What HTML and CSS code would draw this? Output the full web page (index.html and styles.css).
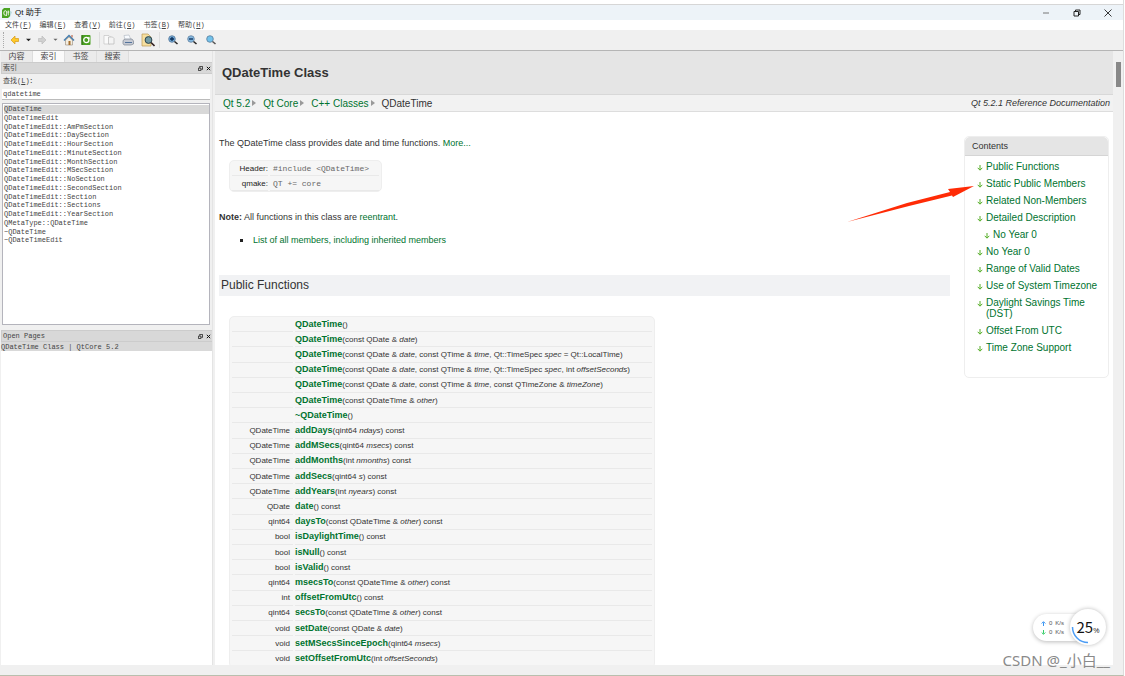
FILE: index.html
```html
<!DOCTYPE html>
<html lang="zh-CN">
<head>
<meta charset="utf-8">
<title>Qt 助手</title>
<link rel="stylesheet" href="styles.css">
</head>
<body>
<div class="window">
  <header class="titlebar">
    <svg class="app-icon" viewBox="0 0 10 10"><path d="M7 2l3 2-2 5-3 1z" fill="#b9dbe0"/><path d="M0 2l2-2h6v8l-2 2H0z" fill="#4ba322"/><ellipse cx="3.3" cy="5" rx="1.5" ry="2.3" fill="none" stroke="#fff" stroke-width=".9"/><path d="M4 7l1 1M6.3 2.5v4.8M5.4 4h2" stroke="#fff" stroke-width=".8"/></svg>
    <h1 class="app-title">Qt 助手</h1>
    <div class="window-buttons">
      <button aria-label="Minimize"><svg viewBox="0 0 10 10"><path d="M2 5h6" stroke="#777"/></svg></button>
      <button aria-label="Restore"><svg viewBox="0 0 10 10"><path d="M2 3.5h4.5V8H2zM3.5 3.5V2H8v4.5H6.5" fill="none" stroke="#222"/></svg></button>
      <button aria-label="Close"><svg viewBox="0 0 10 10"><path d="M1.5 1.5l7 7M8.500 1.500l-7 7" stroke="#222" stroke-width=".9"/></svg></button>
    </div>
  </header>
  <nav class="menubar">
    <button>文件(<u>F</u>)</button><button>编辑(<u>E</u>)</button><button>查看(<u>V</u>)</button><button>前往(<u>G</u>)</button><button>书签(<u>B</u>)</button><button>帮助(<u>H</u>)</button>
  </nav>
  <div class="toolbar">
    <span class="grip"></span>
    <button aria-label="Back"><svg viewBox="0 0 12 12"><path d="M2 6l4-4v2.500h3.500v3H6V10z" fill="#ffc928" stroke="#d59a18" stroke-width=".7"/></svg></button>
    <button class="drop" aria-label="Back history"><svg viewBox="0 0 6 12"><path d="M0 4.500h6L3 7.500z" fill="#222"/></svg></button>
    <button aria-label="Forward"><svg viewBox="0 0 12 12"><path d="M10 6L6 2v2.500H2.500v3H6V10z" fill="#d0d0d0" stroke="#bbb" stroke-width=".7"/></svg></button>
    <button class="drop" aria-label="Forward history"><svg viewBox="0 0 6 12"><path d="M.5 4.500h5L3 7z" fill="#666"/></svg></button>
    <button aria-label="Home"><svg viewBox="0 0 12 12"><path d="M2.500 6v5h7V6L6 3z" fill="#f3ede0" stroke="#938777" stroke-width=".6"/><path d="M1 6.500L6 1.500l5 5" fill="none" stroke="#477eae" stroke-width="1.500"/><path d="M5.500 7h2v4h-2z" fill="#a66f2e"/><path d="M8.500 1h1v2.500h-1z" fill="#b55332"/></svg></button>
    <button class="sync" aria-label="Sync"><svg viewBox="0 0 12 12"><rect x="1.500" y="1" width="9" height="10" rx="1" fill="#4a9f22"/><path d="M2 1v10" stroke="#28690e"/><circle cx="6.300" cy="6" r="2.600" fill="none" stroke="#fff" stroke-width="1.300"/><path d="M7 5l3-.5-1-2z" fill="#fff"/></svg></button>
    <span class="rule"></span>
    <button aria-label="Copy"><svg viewBox="0 0 12 12"><path d="M1 1.500h5l1 1V10H1z" fill="#fafafa" stroke="#c4c4c4" stroke-width=".7"/><path d="M5.500 3h4l1.500 1.500V10H5.500z" fill="#f4f4f4" stroke="#b8b8b8" stroke-width=".7"/></svg></button>
    <button aria-label="Print"><svg viewBox="0 0 12 12"><path d="M3 6L2 1.500l5-.5 2 5z" fill="#f8fbff" stroke="#a9b1bc" stroke-width=".6"/><path d="M1 6.500l2-1.500h7l1.500 2v3L9 11H2L1 9.500z" fill="#c6cad3" stroke="#707987" stroke-width=".6"/><path d="M3 8.500h7" stroke="#54739b"/></svg></button>
    <button class="find" aria-label="Find"><svg viewBox="0 0 14 14"><path d="M1 1h6l3 3v9H1z" fill="#f6dfa0" stroke="#b99955" stroke-width=".7"/><circle cx="7.500" cy="7" r="3.400" fill="#729ba4" stroke="#29444d"/><path d="M10 9.500l3.500 3.500" stroke="#322" stroke-width="1.600"/></svg></button>
    <span class="rule"></span>
    <button aria-label="Zoom in"><svg viewBox="0 0 12 12"><circle cx="5" cy="5" r="3.300" fill="#6fa8d6" stroke="#5a7898" stroke-width=".8"/><path d="M7.500 7.500L10.500 10" stroke="#272727" stroke-width="1.600"/><path d="M3 5h4M5 3v4" stroke="#0c2d58" stroke-width="1.300"/></svg></button>
    <button aria-label="Zoom out"><svg viewBox="0 0 12 12"><circle cx="5" cy="5" r="3.300" fill="#83b7df" stroke="#64839f" stroke-width=".8"/><path d="M7.500 7.500L10.500 10" stroke="#272727" stroke-width="1.600"/><path d="M3 5h4" stroke="#0c2d58" stroke-width="1.300"/></svg></button>
    <button aria-label="Normal size"><svg viewBox="0 0 12 12"><circle cx="5" cy="5" r="3.300" fill="#72c2eb" stroke="#597c9b" stroke-width=".8"/><path d="M7.500 7.500L10.500 10" stroke="#555" stroke-width="1.600"/></svg></button>
  </div>
  <div class="workspace">
    <aside class="side">
      <div class="tabs"><button>内容</button><button class="on">索引</button><button>书签</button><button>搜索</button></div>
      <div class="dock-title"><span>索引</span><button aria-label="Float index"><svg viewBox="0 0 6 6"><path d="M.5 2.500h3v3h-3zM2 2V.5h3.500V4H4" fill="none" stroke="#222"/></svg></button><button aria-label="Close index"><svg viewBox="0 0 6 6"><path d="M1 1l4 4M5 1L1 5" stroke="#111" stroke-width="1.200"/></svg></button></div>
      <label class="find-label" for="q">查找(<u>L</u>)：</label>
      <input class="find-input" id="q" value="qdatetime">
      <div class="index">
        <ul class="index-list">
          <li class="on">QDateTime</li><li>QDateTimeEdit</li><li>QDateTimeEdit::AmPmSection</li><li>QDateTimeEdit::DaySection</li><li>QDateTimeEdit::HourSection</li><li>QDateTimeEdit::MinuteSection</li><li>QDateTimeEdit::MonthSection</li><li>QDateTimeEdit::MSecSection</li><li>QDateTimeEdit::NoSection</li><li>QDateTimeEdit::SecondSection</li><li>QDateTimeEdit::Section</li><li>QDateTimeEdit::Sections</li><li>QDateTimeEdit::YearSection</li><li>QMetaType::QDateTime</li><li>~QDateTime</li><li>~QDateTimeEdit</li>
        </ul>
      </div>
      <div class="dock-title"><span>Open Pages</span><button aria-label="Float pages"><svg viewBox="0 0 6 6"><path d="M.5 2.500h3v3h-3zM2 2V.5h3.500V4H4" fill="none" stroke="#222"/></svg></button><button aria-label="Close pages"><svg viewBox="0 0 6 6"><path d="M1 1l4 4M5 1L1 5" stroke="#111" stroke-width="1.200"/></svg></button></div>
      <div class="pages"><div class="page-row">QDateTime Class | QtCore 5.2</div></div>
    </aside>
    <main class="doc">
      <div class="doc-head"><h2>QDateTime Class</h2></div>
      <nav class="crumbs"><a href="#">Qt 5.2</a><a href="#">Qt Core</a><a href="#">C++ Classes</a><span>QDateTime</span><em>Qt 5.2.1 Reference Documentation</em></nav>
      <div class="doc-body">
        <article class="article">
          <p>The QDateTime class provides date and time functions. <a href="#">More...</a></p>
          <table class="box meta">
            <tr><th>Header:</th><td>#include &lt;QDateTime&gt;</td></tr>
            <tr><th>qmake:</th><td>QT += core</td></tr>
          </table>
          <p><b>Note:</b> All functions in this class are <a href="#">reentrant</a>.</p>
          <ul class="members"><li><a href="#">List of all members, including inherited members</a></li></ul>
          <h3 class="section">Public Functions</h3>
          <table class="box functions">
            <colgroup><col class="type"><col></colgroup>
            <tr><td></td><td><a href="#">QDateTime</a>()</td></tr>
            <tr><td></td><td><a href="#">QDateTime</a>(const QDate &amp; <i>date</i>)</td></tr>
            <tr><td></td><td><a href="#">QDateTime</a>(const QDate &amp; <i>date</i>, const QTime &amp; <i>time</i>, Qt::TimeSpec <i>spec</i> = Qt::LocalTime)</td></tr>
            <tr><td></td><td><a href="#">QDateTime</a>(const QDate &amp; <i>date</i>, const QTime &amp; <i>time</i>, Qt::TimeSpec <i>spec</i>, int <i>offsetSeconds</i>)</td></tr>
            <tr><td></td><td><a href="#">QDateTime</a>(const QDate &amp; <i>date</i>, const QTime &amp; <i>time</i>, const QTimeZone &amp; <i>timeZone</i>)</td></tr>
            <tr><td></td><td><a href="#">QDateTime</a>(const QDateTime &amp; <i>other</i>)</td></tr>
            <tr><td></td><td><a href="#">~QDateTime</a>()</td></tr>
            <tr><td>QDateTime</td><td><a href="#">addDays</a>(qint64 <i>ndays</i>) const</td></tr>
            <tr><td>QDateTime</td><td><a href="#">addMSecs</a>(qint64 <i>msecs</i>) const</td></tr>
            <tr><td>QDateTime</td><td><a href="#">addMonths</a>(int <i>nmonths</i>) const</td></tr>
            <tr><td>QDateTime</td><td><a href="#">addSecs</a>(qint64 <i>s</i>) const</td></tr>
            <tr><td>QDateTime</td><td><a href="#">addYears</a>(int <i>nyears</i>) const</td></tr>
            <tr><td>QDate</td><td><a href="#">date</a>() const</td></tr>
            <tr><td>qint64</td><td><a href="#">daysTo</a>(const QDateTime &amp; <i>other</i>) const</td></tr>
            <tr><td>bool</td><td><a href="#">isDaylightTime</a>() const</td></tr>
            <tr><td>bool</td><td><a href="#">isNull</a>() const</td></tr>
            <tr><td>bool</td><td><a href="#">isValid</a>() const</td></tr>
            <tr><td>qint64</td><td><a href="#">msecsTo</a>(const QDateTime &amp; <i>other</i>) const</td></tr>
            <tr><td>int</td><td><a href="#">offsetFromUtc</a>() const</td></tr>
            <tr><td>qint64</td><td><a href="#">secsTo</a>(const QDateTime &amp; <i>other</i>) const</td></tr>
            <tr><td>void</td><td><a href="#">setDate</a>(const QDate &amp; <i>date</i>)</td></tr>
            <tr><td>void</td><td><a href="#">setMSecsSinceEpoch</a>(qint64 <i>msecs</i>)</td></tr>
            <tr><td>void</td><td><a href="#">setOffsetFromUtc</a>(int <i>offsetSeconds</i>)</td></tr>
          </table>
        </article>
        <nav class="toc">
          <h3>Contents</h3>
          <ul>
            <li><svg viewBox="0 0 6 6"><path d="M3 0v5M.7 2.800L3 5.200l2.300-2.400" /></svg><a href="#">Public Functions</a></li>
            <li><svg viewBox="0 0 6 6"><path d="M3 0v5M.7 2.800L3 5.200l2.300-2.400" /></svg><a href="#">Static Public Members</a></li>
            <li><svg viewBox="0 0 6 6"><path d="M3 0v5M.7 2.800L3 5.200l2.300-2.400" /></svg><a href="#">Related Non-Members</a></li>
            <li><svg viewBox="0 0 6 6"><path d="M3 0v5M.7 2.800L3 5.200l2.300-2.400" /></svg><a href="#">Detailed Description</a></li>
            <li class="sub"><svg viewBox="0 0 6 6"><path d="M3 0v5M.7 2.800L3 5.200l2.300-2.400" /></svg><a href="#">No Year 0</a></li>
            <li><svg viewBox="0 0 6 6"><path d="M3 0v5M.7 2.800L3 5.200l2.300-2.400" /></svg><a href="#">No Year 0</a></li>
            <li><svg viewBox="0 0 6 6"><path d="M3 0v5M.7 2.800L3 5.200l2.300-2.400" /></svg><a href="#">Range of Valid Dates</a></li>
            <li><svg viewBox="0 0 6 6"><path d="M3 0v5M.7 2.800L3 5.200l2.300-2.400" /></svg><a href="#">Use of System Timezone</a></li>
            <li><svg viewBox="0 0 6 6"><path d="M3 0v5M.7 2.800L3 5.200l2.300-2.400" /></svg><a href="#">Daylight Savings Time (DST)</a></li>
            <li><svg viewBox="0 0 6 6"><path d="M3 0v5M.7 2.800L3 5.200l2.300-2.400" /></svg><a href="#">Offset From UTC</a></li>
            <li><svg viewBox="0 0 6 6"><path d="M3 0v5M.7 2.800L3 5.200l2.300-2.400" /></svg><a href="#">Time Zone Support</a></li>
          </ul>
          <svg class="pointer" viewBox="0 0 128 38"><path d="M0 37L60 18 103 7 101 4 127 1 106 12 105 10.500 62 21z" fill="#ff2b06"/></svg>
        </nav>
      </div>
    </main>
    <div class="scroll"><div class="thumb"></div></div>
  </div>
  <footer class="status"></footer>
</div>
<div class="monitor">
  <div class="rates">
    <div><svg viewBox="0 0 6 6"><path d="M3 6V1.500M.8 3L3 .8 5.200 3" fill="none" stroke="#3994f2" stroke-width="1.200"/></svg><span>0</span><span>K/s</span></div>
    <div><svg viewBox="0 0 6 6"><path d="M3 0v4.500M.8 3L3 5.200 5.200 3" fill="none" stroke="#38cd6a" stroke-width="1.200"/></svg><span>0</span><span>K/s</span></div>
  </div>
  <div class="gauge"><svg viewBox="0 0 36 36"><path d="M2.500 18A15.500 15.500 0 0 0 18 33.500" fill="none" stroke="#4b9cf5" stroke-width="1.500"/></svg><span>25</span><small>%</small></div>
</div>
<div class="watermark">CSDN @_小白__</div>
</body>
</html>
```
FILE: styles.css
```css
* { box-sizing: border-box; }
body { margin: 0; height: 100vh; overflow: hidden; background: #fff; color: #333; font: 9px/12px "Liberation Sans", "Noto Sans CJK SC", sans-serif; position: relative; }
h1, h2, h3, p, ul { margin: 0; padding: 0; font-weight: normal; list-style: none; }
button { border: 0; padding: 0; margin: 0; background: none; font: inherit; color: inherit; display: block; }
svg { display: block; }
a { color: #00732f; text-decoration: none; }

.window { height: 100vh; padding-top: 4px; display: flex; flex-direction: column; margin-right: 1px; border-right: 1px solid #ddd; border-bottom: 1px solid #b9bfae; background: #f0f0f0; background-clip: content-box; }
.titlebar { display: flex; align-items: center; height: 16px; flex: none; border-top: 1px solid #d6d6d6; background: #edf3f8; padding-left: 2px; }
.app-icon { width: 10px; height: 10px; }
.app-title { font-size: 8px; color: #111; margin-left: 3px; }
.window-buttons { margin-left: auto; display: flex; gap: 21px; padding-right: 10px; }
.window-buttons svg { width: 10px; height: 10px; }

.menubar, .toolbar, .tabs, .dock-title, .find-label, .find-input, .index, .pages { font: 7px/10px "Liberation Mono", "Noto Sans CJK SC", monospace; }
.menubar { display: flex; gap: 8px; height: 10px; flex: none; background: #fff; padding-left: 5px; color: #444; }
.toolbar { display: flex; align-items: center; height: 21px; flex: none; padding-left: 3px; border-bottom: 1px solid #b5b5b5; gap: 5px; }
.toolbar svg { width: 12px; height: 12px; }
.toolbar .drop svg { width: 5px; }
.toolbar .find svg { width: 14px; height: 14px; }
.toolbar .rule + button ~ button { margin-left: 2px; }
.grip { width: 1px; height: 16px; border-left: 1px dotted #aaa; }
.rule { width: 1px; height: 16px; background: #ddd; margin-left: 2px; margin-right: -2px; }
.find + .rule { margin-left: -1px; margin-right: 0; }

.workspace { flex: 1; min-height: 0; display: flex; }
.side { width: 213px; flex: none; display: flex; flex-direction: column; padding-left: 1px; border-right: 1px solid #e4e4e4; color: #444; }
.tabs { display: flex; height: 11px; font-size: 8px; flex: none; }
.tabs button { width: 32px; background: #ebebeb; border-right: 1px solid #ddd; }
.tabs .on { background: #fafafa; }
.dock-title { display: flex; align-items: center; gap: 3px; height: 12px; flex: none; padding: 0 1px; background: #d8d8d8; border: 1px solid #ccc; border-right: 0; }
.dock-title span { flex: 1; }
.dock-title svg { width: 5px; height: 5px; }
.find-label { height: 15px; line-height: 14px; padding-left: 2px; flex: none; }
.find-input { width: auto; height: 11px; flex: none; margin: 0 2px 3px 1px; padding: 0 1px; border: 0; border-bottom: 1px solid #bbb; background: #fff; color: #444; }
.index { height: 222px; flex: none; margin: 0 2px 5px 1px; border: 1px solid #b4b4bc; background: #fff; padding-top: 1px; }
.index-list { height: 140px; display: grid; grid-auto-rows: 1fr; line-height: 8px; padding-left: 1px; }
.index-list .on { background: #d8d8d8; }
.pages { flex: 1; background: #fff; }
.page-row { height: 9px; background: #d9d9d9; }

.doc { flex: 1; min-width: 0; margin-left: 2px; display: flex; flex-direction: column; background: #fff; overflow: hidden; }
.doc-head { height: 44px; flex: none; background: #e5e5e5; padding: 14px 7px; border-bottom: 1px solid #d8d8d8; }
.doc-head h2 { font-size: 13px; line-height: 16px; font-weight: bold; }
.crumbs { display: flex; gap: 7px; height: 17px; line-height: 17px; flex: none; padding: 0 3px 0 8px; background: #f2f2f2; border-bottom: 1px solid #ddd; font-size: 10px; }
.crumbs a { display: flex; align-items: center; gap: 2px; }
.crumbs a::after { content: ""; border: 3px solid transparent; border-left: 4px solid #999; border-right: 0; }
.crumbs em { margin-left: auto; font-size: 9px; }
.doc-body { flex: 1; min-height: 0; display: flex; align-items: flex-start; gap: 14px; padding: 24px 4px 0; line-height: 14px; }
.article { flex: 1; min-width: 0; }
.box { background: #f6f6f6; border: 1px solid #eee; border-radius: 5px; border-spacing: 2px 0; margin-left: 10px; font-size: 8px; line-height: 13px; }
.box td, .box th { border-bottom: 1px solid #e9e9e9; padding: 0 3px; }
.meta { margin-top: 10px; margin-bottom: 18px; width: 153px; height: 32px; }
.meta th { font-weight: normal; text-align: right; width: 36px; padding: 0; color: #222; }
.meta td { font-family: "Liberation Mono", monospace; color: #666; }
.members { padding-left: 34px; margin-top: 8px; }
.members li { list-style: square; }
.members li::marker { color: #222; font-size: 11px; }
.section { margin-top: 28px; height: 21px; line-height: 21px; font-size: 12px; background: #f1f2f4; padding-left: 2px; }
.functions { margin-top: 20px; width: 426px; height: 352px; table-layout: fixed; }
.functions .type { width: 61px; }
.functions td:first-child { text-align: right; }
.functions td { white-space: nowrap; }
.functions td:last-child { padding-left: 0; }
.functions a { font-size: 9px; font-weight: bold; }

.toc { width: 145px; flex: none; height: 242px; border: 1px solid #eee; border-radius: 5px; position: relative; }
.toc h3 { height: 19px; line-height: 19px; font-size: 9px; background: #e5e5e5; border-bottom: 1px solid #d5d5d5; border-radius: 5px 5px 0 0; padding-left: 7px; }
.toc ul { display: grid; gap: 6px; padding: 5px 6px 0 12px; font-size: 10px; line-height: 11px; }
.toc li { display: flex; gap: 3px; }
.toc li svg { width: 6px; height: 6px; flex: none; margin-top: 4px; fill: none; stroke: #54ad27; stroke-width: 1; }
.toc .sub { padding-left: 7px; }
.pointer { position: absolute; width: 128px; height: 38px; right: 133px; top: 48px; }

.scroll { width: 10px; flex: none; background: #f0f0f0; padding: 11px 2px 0 3px; }
.thumb { height: 25px; background: #888; }
.status { height: 10px; flex: none; }

.monitor { position: absolute; right: 19px; bottom: 31px; display: flex; align-items: center; }
.rates { width: 52px; height: 27px; border-radius: 14px 0 0 14px; background: #fff; box-shadow: 0 1px 4px #bbb; padding: 5px 0 0 8px; margin-right: -15px; font-size: 6px; line-height: 9px; color: #555; }
.rates div { display: flex; align-items: center; gap: 3px; }
.rates svg { width: 5px; height: 5px; }
.gauge { position: relative; width: 36px; height: 36px; border-radius: 50%; background: #fff; box-shadow: 0 0 4px #bbb; display: flex; justify-content: center; align-items: baseline; line-height: 36px; color: #111; }
.gauge svg { position: absolute; inset: 0; }
.gauge span { font: 15px/36px "Noto Sans CJK SC", sans-serif; }
.gauge small { font-size: 7px; }
.watermark { position: absolute; right: 15px; bottom: 7px; font: 15px/18px "Noto Sans", "Noto Sans CJK SC", sans-serif; color: #8a8a8a; }
```
